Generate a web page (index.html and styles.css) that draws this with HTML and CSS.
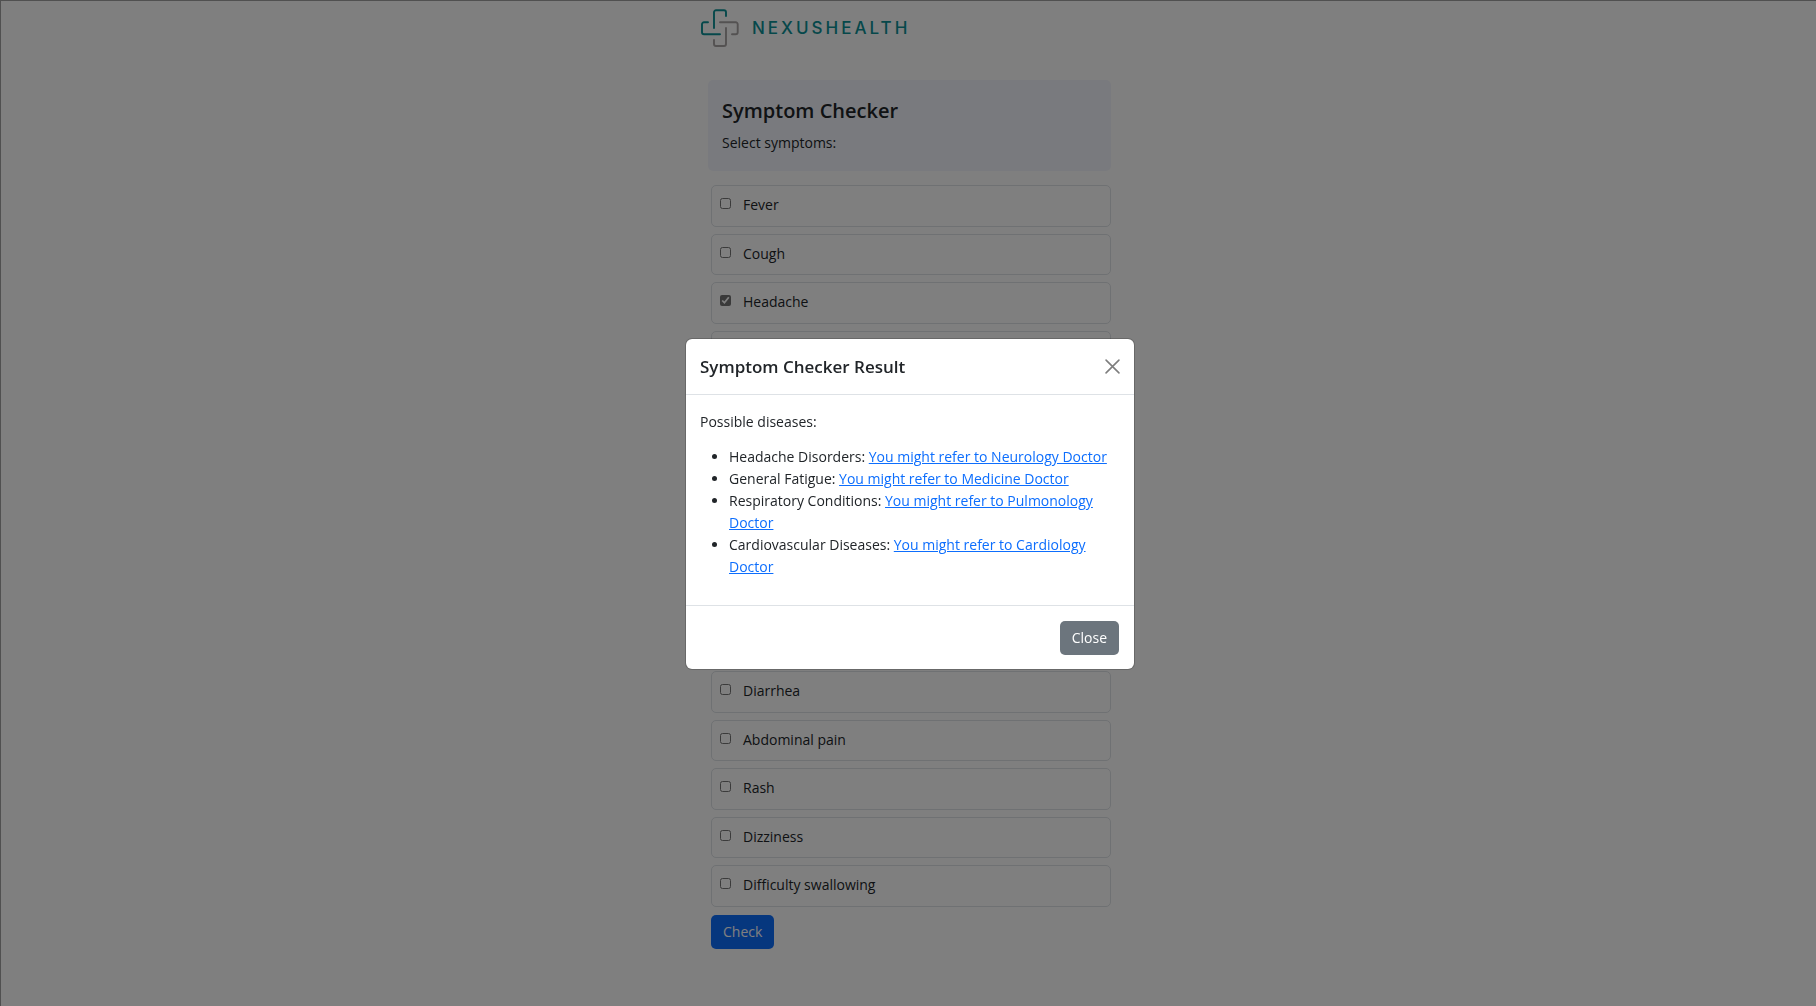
FILE: index.html
```html
<!DOCTYPE html>
<html lang="en">
<head>
<meta charset="utf-8">
<meta name="viewport" content="width=device-width, initial-scale=1">
<title>Symptom Checker</title>
<link rel="stylesheet" href="styles.css">
</head>
<body>
<div class="page">
  <header class="brand">
    <svg class="brand-mark" viewBox="0 0 40 40" aria-hidden="true">
      <g fill="none" stroke-width="1.9" stroke-linecap="round">
        <path stroke="#0c9196" d="M26 8V4.3a2 2 0 0 0-2-2H16a2 2 0 0 0-2 2V20"/>
        <path stroke="#0c9196" d="M8 14.3H4a2 2 0 0 0-2 2V24.3a2 2 0 0 0 2 2H20"/>
        <path stroke="#a8a4a4" d="M20 14.3H35.7a2 2 0 0 1 2 2V24.3a2 2 0 0 1-2 2H32"/>
        <path stroke="#a8a4a4" d="M26 20V36a2 2 0 0 1-2 2H16a2 2 0 0 1-2-2V32"/>
      </g>
    </svg>
    <span class="brand-name">NEXUSHEALTH</span>
  </header>
  <main class="checker">
    <section class="intro">
      <h1 class="intro-title">Symptom Checker</h1>
      <p class="intro-text">Select symptoms:</p>
    </section>
    <form class="symptoms">
      <label class="symptom"><input class="tick" type="checkbox">Fever</label>
      <label class="symptom"><input class="tick" type="checkbox">Cough</label>
      <label class="symptom"><input class="tick" type="checkbox" checked>Headache</label>
      <label class="symptom"><input class="tick" type="checkbox">Fatigue</label>
      <label class="symptom"><input class="tick" type="checkbox">Shortness of breath</label>
      <label class="symptom"><input class="tick" type="checkbox">Chest pain</label>
      <label class="symptom"><input class="tick" type="checkbox">Sore throat</label>
      <label class="symptom"><input class="tick" type="checkbox">Muscle pain</label>
      <label class="symptom"><input class="tick" type="checkbox">Nausea</label>
      <label class="symptom"><input class="tick" type="checkbox">Vomiting</label>
      <label class="symptom"><input class="tick" type="checkbox">Diarrhea</label>
      <label class="symptom"><input class="tick" type="checkbox">Abdominal pain</label>
      <label class="symptom"><input class="tick" type="checkbox">Rash</label>
      <label class="symptom"><input class="tick" type="checkbox">Dizziness</label>
      <label class="symptom"><input class="tick" type="checkbox">Difficulty swallowing</label>
      <button class="btn btn-primary" type="button">Check</button>
    </form>
  </main>
</div>

<div class="backdrop">
  <div class="modal" role="dialog" aria-modal="true" aria-labelledby="result-title">
    <div class="modal-header">
      <h2 class="modal-title" id="result-title">Symptom Checker Result</h2>
      <button class="modal-dismiss" type="button" aria-label="Close">
        <svg class="cross" viewBox="0 0 14 14" aria-hidden="true"><path d="M1 1L13 13M13 1L1 13" stroke="#000" stroke-width="1.5" stroke-linecap="round"/></svg>
      </button>
    </div>
    <div class="modal-body">
      <p class="lead">Possible diseases:</p>
      <ul class="diseases">
        <li>Headache Disorders: <a href="#neurology">You might refer to Neurology Doctor</a></li>
        <li>General Fatigue: <a href="#medicine">You might refer to Medicine Doctor</a></li>
        <li>Respiratory Conditions: <a href="#pulmonology">You might refer to Pulmonology Doctor</a></li>
        <li>Cardiovascular Diseases: <a href="#cardiology">You might refer to Cardiology Doctor</a></li>
      </ul>
    </div>
    <div class="modal-footer">
      <button class="btn btn-secondary" type="button">Close</button>
    </div>
  </div>
</div>
</body>
</html>
```
FILE: styles.css
```css
* {
  box-sizing: border-box;
}

body {
  margin: 0;
  min-height: 100vh;
  border-top: 1px solid #a0a0a0;
  border-left: 1px solid #a0a0a0;
  background: #fff;
  color: #212529;
  font-family: "Segoe UI", "Open Sans", "Noto Sans", sans-serif;
  font-size: 14px;
  line-height: 22px;
}

h1,
h2,
p,
ul {
  margin: 0;
}

.page {
  width: 100%;
  max-width: 421px;
  margin: 0 auto;
  padding: 0 8px 0 2px;
}

.brand {
  display: flex;
  align-items: center;
  gap: 12px;
  height: 55px;
  padding-bottom: 1px;
}

.brand-mark {
  width: 40px;
  height: 40px;
}

.brand-name {
  color: #0c9196;
  font-family: Inter, Lato, sans-serif;
  font-size: 17px;
  font-weight: 500;
  letter-spacing: 3px;
}

.checker {
  padding: 24px 0 40px 8px;
}

.intro {
  padding: 16px 14px;
  border-radius: 5px;
  background: #f3f5fc;
}

.intro-title {
  font-size: 20px;
  font-weight: 600;
  line-height: 30px;
}

.intro-text {
  padding: 6px 0 1px;
}

.symptoms {
  display: flex;
  flex-direction: column;
  gap: 7px;
  margin: 14px 0 0 3px;
}

.symptom {
  display: flex;
  align-items: flex-start;
  gap: 12px;
  padding: 8px 8px 10px;
  border: 1px solid #dee2e6;
  border-radius: 5px;
}

.symptom:nth-child(5n + 2),
.symptom:nth-child(5n + 4) {
  padding-bottom: 9px;
}

.tick {
  width: 11px;
  height: 11px;
  margin: 4px 0 0;
  accent-color: #757575;
}

.btn {
  align-self: flex-start;
  padding: 6px 12px;
  border: 0;
  border-radius: 5px;
  color: #fff;
  font: inherit;
}

.btn-primary {
  margin-top: 1px;
  background: #0d6efd;
}

.btn-secondary {
  background: #6c757d;
}

.backdrop {
  position: fixed;
  inset: 0;
  display: flex;
  align-items: center;
  justify-content: center;
  padding: 2px 0 0 4px;
  background: rgba(0, 0, 0, 0.5);
}

.modal {
  width: 450px;
  max-width: 100%;
  border: 1px solid rgba(0, 0, 0, 0.18);
  border-radius: 7px;
  background: #fff;
  background-clip: padding-box;
}

.modal-header {
  display: flex;
  align-items: center;
  justify-content: space-between;
  padding: 14px;
  border-bottom: 1px solid #dee2e6;
}

.modal-title {
  font-size: 17px;
  font-weight: 600;
  line-height: 27px;
}

.modal-dismiss {
  display: flex;
  padding: 0;
  border: 0;
  background: none;
  opacity: 0.5;
}

.cross {
  width: 15px;
  height: 15px;
}

.modal-body {
  padding: 16px 14px 27px;
}

.diseases {
  margin-top: 13px;
  padding-left: 29px;
}

.diseases a {
  color: #0d6efd;
}

.modal-footer {
  display: flex;
  justify-content: flex-end;
  padding: 15px 15px 14px;
  border-top: 1px solid #dee2e6;
}
```
